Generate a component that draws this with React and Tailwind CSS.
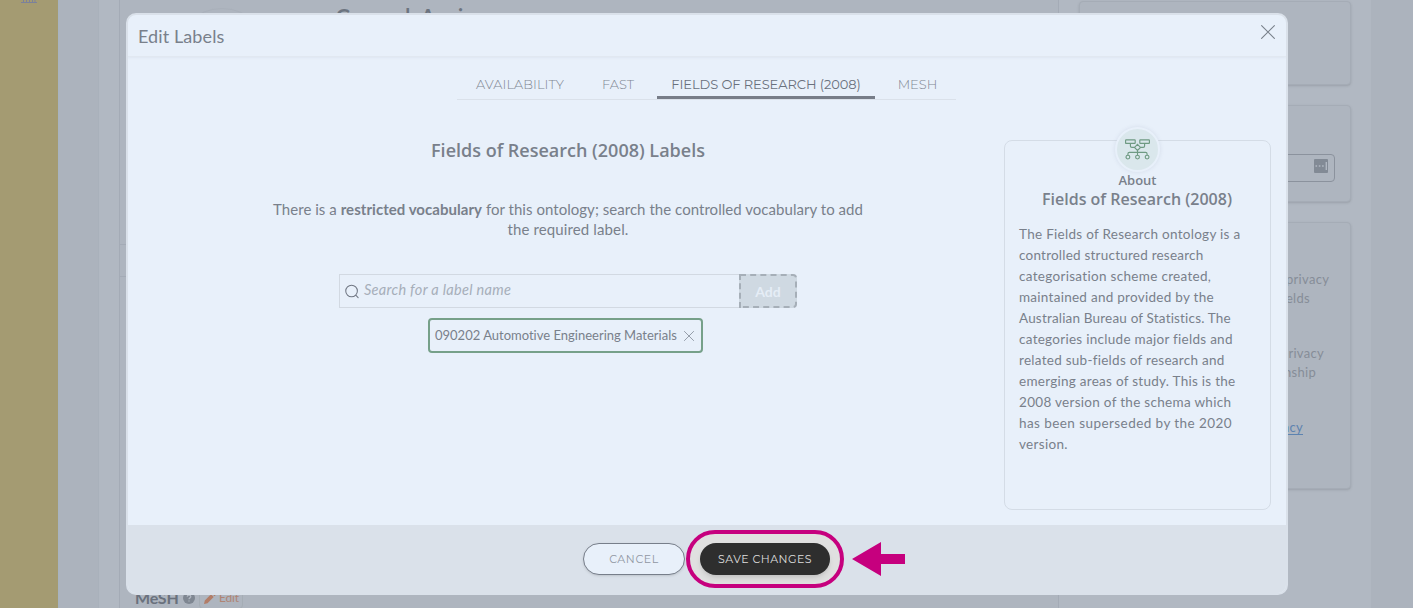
import React from "react";

const tabs = [
  { label: "AVAILABILITY", cls: "w-[126px] text-[#7f8692] font-light tracking-[0.03px]" },
  { label: "FAST", cls: "w-[70px] text-[#7f8692] font-light tracking-[0px] mr-[4px]" },
  { label: "FIELDS OF RESEARCH (2008)", cls: "w-[218px] text-[#6a717d] font-normal tracking-[-0.08px] border-b-[3px] border-[#777d88]" },
  { label: "MESH", cls: "w-[85px] text-[#7f8692] font-light tracking-[0px]" },
];

const aboutLines = [
  { text: "The Fields of Research ontology is a", cls: "tracking-[0.29px]" },
  { text: "controlled structured research", cls: "tracking-[0.22px]" },
  { text: "categorisation scheme created,", cls: "tracking-[0.31px]" },
  { text: "maintained and provided by the", cls: "tracking-[0.27px]" },
  { text: "Australian Bureau of Statistics. The", cls: "tracking-[0.18px]" },
  { text: "categories include major fields and", cls: "tracking-[0.28px]" },
  { text: "related sub-fields of research and", cls: "tracking-[0.27px]" },
  { text: "emerging areas of study. This is the", cls: "tracking-[0.27px]" },
  { text: "2008 version of the schema which", cls: "tracking-[0.3px]" },
  { text: "has been superseded by the 2020", cls: "tracking-[0.43px]" },
  { text: "version.", cls: "tracking-[0.33px]" },
];

function Cross({ className, width }) {
  return (
    <svg viewBox="0 0 14 14" className={className} fill="none" stroke="currentColor" strokeWidth={width} strokeLinecap="round">
      <path d="M.6.6 13.4 13.4M13.4.6.6 13.4" />
    </svg>
  );
}

function OntologyIcon() {
  return (
    <svg viewBox="0 0 25 21" className="h-[21px] w-[25px] shrink-0" fill="none" stroke="#6f9a83" strokeWidth="1.15">
      <rect x=".6" y=".8" width="9.6" height="3.6" rx=".5" />
      <rect x="14.8" y=".8" width="9.6" height="3.6" rx=".5" />
      <path d="M5.4 4.4V7q0 1.4 1.4 1.4h2.7M19.6 4.4V7q0 1.4-1.4 1.4h-2.7M12.5 5.4l3 3-3 3-3-3zM12.5 11.4v5M2.9 16.2v-1.3q0-1.5 1.5-1.5h16.2q1.5 0 1.5 1.5v1.3" />
      <circle cx="2.9" cy="18.1" r="1.9" />
      <circle cx="12.5" cy="18.1" r="1.9" />
      <circle cx="22.1" cy="18.1" r="1.9" />
    </svg>
  );
}

function PageBehind() {
  return (
    <div className="flex h-full">
      <aside className="flex w-[58px] shrink-0 justify-center bg-[#a49b72]">
        <svg viewBox="0 0 16 4" className="h-1 w-4" stroke="#7b819b" fill="none">
          <path d="M0 2.5h16M2.5 0v2M5.5 0v2M8.5 0v2M11.5 0v2M14 0v2" />
        </svg>
      </aside>
      <div className="w-10 shrink-0 border-l border-[#a7b3c0] bg-[#acb3bd]" />
      <div className="flex w-[1273px] shrink-0 border-l border-[#a9b1bb] bg-[#b1b8c2] pl-5">
        <div className="flex w-[940px] shrink-0 flex-col border-x border-[#a4abb6] bg-[#aeb5bf]">
          <div className="flex h-[244px] shrink-0 pl-[54px] pt-1">
            <div className="mt-1 h-24 w-24 shrink-0 rounded-full border border-[#a9b0ba]" />
            <div className="ml-[66px] whitespace-nowrap text-[20px] font-bold leading-6 tracking-[0.8px] text-[#6c7480] [word-spacing:5px]">General Agai</div>
          </div>
          <div className="h-[33px] w-full shrink-0 border-y border-[#a4abb6]" />
          <div className="mt-[310px] flex h-[22px] shrink-0 items-center pl-[15px]">
            <span className="w-[48px] text-[16px] font-bold tracking-[-0.2px] text-[#6a717d]">MeSH</span>
            <svg viewBox="0 0 12 12" className="h-3 w-3 shrink-0">
              <circle cx="6" cy="6" r="6" fill="#7f8792" />
              <path d="M4.2 4.6C4.3 2.4 7.8 2.5 7.8 4.5 7.8 5.9 6 5.8 6 7.2M6 8.5v1.1" stroke="#b1b8c2" strokeWidth="1.3" fill="none" />
            </svg>
            <div className="ml-[4px] flex h-[22px] w-[44px] items-center gap-[3px] rounded border border-[#a5adb5] pl-1 text-[12px] tracking-[-0.2px] text-[#b08474]">
              <svg viewBox="0 0 12 12" className="h-3 w-3 shrink-0" fill="#b27d68">
                <path d="M0 12 .8 8.5 7 2.3 9.7 5 3.5 11.2zM7.8 1.5 9 .3q.6-.5 1.2 0l1.5 1.5q.5.6 0 1.2l-1.2 1.2z" />
              </svg>
              Edit
            </div>
          </div>
        </div>
        <div className="flex w-[292px] shrink-0 flex-col pl-5 text-[13px] leading-[19px] text-[#868d98]">
          <div className="mt-px h-[84px] shrink-0 rounded border border-[#a5acb6] bg-[#aeb5bf] shadow-sm" />
          <div className="mt-5 flex h-[97px] shrink-0 justify-end rounded border border-[#a5acb6] bg-[#aeb5bf] pr-[15px] pt-12 shadow-sm">
            <div className="flex h-7 w-[180px] justify-end rounded border border-[#8b929d] pr-[6px] pt-1">
              <svg viewBox="0 0 14 14" className="h-[14px] w-[14px]">
                <rect width="14" height="14" rx="1" fill="#828a95" />
                <path d="M1.5 7h1.6M4.8 7h1.6M8.1 7h1.6M12.3 3v8" stroke="#b1b8c2" strokeWidth="1.4" />
              </svg>
            </div>
          </div>
          <div className="mt-5 h-[267px] shrink-0 rounded border border-[#a5acb6] bg-[#aeb5bf] pl-[206px] pt-[47px] tracking-[0.3px] shadow-sm">
            <div className="whitespace-nowrap">privacy</div>
            <div className="flex w-[24px] justify-end whitespace-nowrap">fields</div>
            <div className="mt-9 flex w-[38px] justify-end whitespace-nowrap">privacy</div>
            <div className="flex w-[30px] justify-end whitespace-nowrap">relationship</div>
            <div className="mt-9 flex w-[17px] justify-end whitespace-nowrap text-[#5d83b0] underline underline-offset-2">privacy</div>
          </div>
        </div>
      </div>
      <div className="flex-1 bg-[#acb3bd]" />
    </div>
  );
}

function Dialog() {
  return (
    <section className="absolute left-[126px] top-[13px] flex h-[582px] w-[1162px] flex-col overflow-hidden rounded-[10px] border-2 border-[#dae1ea] bg-[#e8f0fa]">
      <header className="flex h-[42px] shrink-0 justify-between border-b border-[#e1e8f1] pl-[10px] pr-[11px] shadow-[0_1px_2px_rgba(100,115,140,0.07)]">
        <h1 className="pt-[9px] text-[18px] leading-6 tracking-[0.1px] text-[#79808b]">Edit Labels</h1>
        <Cross className="mt-[10px] h-[14px] w-[14px] text-[#79808b]" width="1.1" />
      </header>
      <div className="flex h-[43px] shrink-0 pl-[329px]">
        <nav className="mt-[13px] flex h-[30px] w-[499px] border-b border-[#dae1ea] font-['Montserrat','Lato',sans-serif] text-[13px]">
          {tabs.map((t) => (
            <div key={t.label} className={`flex h-[29px] shrink-0 items-start justify-center whitespace-nowrap pt-[4px] leading-5 ${t.cls}`}>
              {t.label}
            </div>
          ))}
        </nav>
      </div>
      <div className="flex h-[425px] shrink-0 pr-[15px]">
        <main className="flex w-[876px] shrink-0 flex-col items-center pl-1">
          <h2 className="mt-[38px] font-['Open_Sans',sans-serif] text-[18px] font-semibold leading-6">Fields of Research (2008) Labels</h2>
          <div className="mt-[37px] whitespace-nowrap text-center text-[15px] leading-5">
            <div className="tracking-[0.04px]">There is a <b>restricted vocabulary</b> for this ontology; search the controlled vocabulary to add</div>
            <div className="tracking-[0.12px]">the required label.</div>
          </div>
          <div className="mt-[35px] flex h-[34px] w-[458px]">
            <div className="flex flex-1 items-center border border-r-0 border-[#d2d9e2] pl-[5px]">
              <svg viewBox="0 0 16 16" className="h-[15px] w-[15px]" fill="none" stroke="#6f7682" strokeWidth="1.1" strokeLinecap="round">
                <circle cx="7" cy="7.5" r="6.2" /><path d="m11.7 12.2 2.3 2.3" />
              </svg>
              <span className="mb-[3px] ml-1 text-[14.5px] italic tracking-[0.3px] text-[#a6aeb9]">Search for a label name</span>
            </div>
            <button className="w-[58px] rounded-r-[4px] border-2 border-dashed border-[#a6afb8] bg-[#cfd9e2] text-[14px] font-bold text-[#e5edf6]">Add</button>
          </div>
          <div className="ml-[296px] mt-[10px] flex h-[35px] w-[275px] items-center justify-between self-start rounded border-2 border-[#76a089] pl-[5px] pr-[7px] text-[13px]">
            <span className="whitespace-nowrap [font-variant-ligatures:none]">090202 Automotive Engineering Materials</span>
            <Cross className="h-[10px] w-[10px] text-[#8f97a3]" width="1.3" />
          </div>
        </main>
        <aside className="mt-[40px] flex h-[370px] w-[267px] shrink-0 flex-col items-center rounded-lg border border-[#d4dce6]">
          <div className="-ml-px -mt-[14px] flex h-[45px] w-[45px] shrink-0 items-center justify-center rounded-full border-2 border-[#e8f0fa] bg-[#dae7ec] shadow-[0_0_4px_rgba(100,115,140,0.15)]">
            <OntologyIcon />
          </div>
          <div className="font-['Open_Sans',sans-serif] text-[13px] font-semibold leading-4">About</div>
          <h3 className="-ml-px font-['Open_Sans',sans-serif] text-[16px] font-semibold leading-[22px]">Fields of Research (2008)</h3>
          <div className="mt-[14px] w-full pl-[14px] text-[13.5px] leading-[21px]">
            {aboutLines.map((l) => (
              <div key={l.text} className={`whitespace-nowrap ${l.cls}`}>{l.text}</div>
            ))}
          </div>
        </aside>
      </div>
      <footer className="flex flex-1 items-start bg-[#dae1ea] pl-[455px] pt-[5px] font-['Montserrat','Lato',sans-serif] text-[11px]">
        <button className="mt-[13px] h-8 w-[102px] rounded-full border border-[#777e8a] bg-[#e8f0fa] tracking-[0.6px] text-[#9097a3] shadow-sm">CANCEL</button>
        <div className="ml-px flex h-[58px] w-[158px] items-center justify-center rounded-full border-4 border-[#c6007e] bg-[#e0e0e0]">
          <button className="h-8 w-[130px] rounded-full bg-[#2e2e2e] tracking-[0.5px] text-[#dedede] shadow-md">SAVE CHANGES</button>
        </div>
        <svg viewBox="0 0 53 34" className="ml-2 mt-3 h-[34px] w-[53px]" fill="#c6007e">
          <path d="M0 17 29 0v12h24v10H29v12z" />
        </svg>
      </footer>
    </section>
  );
}

export default function App() {
  return (
    <div className="relative h-[608px] w-[1413px] overflow-hidden bg-[#b1b8c2] font-['Proxima_Nova','Lato',sans-serif] text-[#79808b]">
      <PageBehind />
      <Dialog />
    </div>
  );
}
